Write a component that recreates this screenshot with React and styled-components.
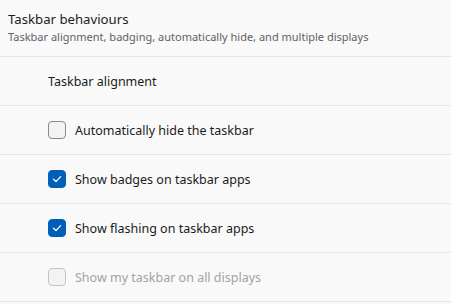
import React from 'react';
import styled, { createGlobalStyle } from 'styled-components';

const Global = createGlobalStyle`
  html, body {
    margin: 0;
    padding: 0;
    background: #f9f9f9;
  }
  body {
    font-family: "Noto Sans", "Open Sans", sans-serif;
    color: #1b1b1b;
  }
`;

const Panel = styled.div`
  width: 451px;
  height: 304px;
  background: #f9f9f9;
  overflow: hidden;
`;

const Header = styled.div`
  height: 57px;
  box-sizing: border-box;
  padding: 9px 8px 0 8px;
  border-bottom: 1px solid #e5e5e5;
`;

const Title = styled.div`
  font-size: 13.2px;
  line-height: 20px;
  color: #1b1b1b;
`;

const Subtitle = styled.div`
  font-size: 11px;
  line-height: 16px;
  color: #616161;
`;

const Row = styled.div`
  height: 49px;
  box-sizing: border-box;
  border-bottom: 1px solid #e5e5e5;
  display: flex;
  align-items: center;
  gap: 9px;
  padding-left: 48px;
  font-size: 12.5px;
  color: ${({ $disabled }) => ($disabled ? '#a3a3a3' : '#1b1b1b')};
`;

const Box = styled.span`
  width: 18px;
  height: 18px;
  box-sizing: border-box;
  border-radius: 4px;
  display: flex;
  align-items: center;
  justify-content: center;
  background: ${({ $checked }) => ($checked ? '#005fb8' : '#f3f3f3')};
  border: 1px solid ${({ $checked, $disabled }) =>
    $checked ? '#005fb8' : $disabled ? '#c4c4c4' : '#8a8a8a'};
`;

const Check = () => (
  <svg width="12" height="12" viewBox="0 0 12 12" fill="none">
    <path d="M2.5 6.3 L5 8.6 L9.6 3.6" stroke="#fff" strokeWidth="1.3" strokeLinecap="round" strokeLinejoin="round" />
  </svg>
);

const Checkbox = ({ checked, disabled, label }) => (
  <Row $disabled={disabled}>
    <Box $checked={checked} $disabled={disabled}>{checked && <Check />}</Box>
    <span>{label}</span>
  </Row>
);

const options = [
  { label: 'Automatically hide the taskbar', checked: false },
  { label: 'Show badges on taskbar apps', checked: true },
  { label: 'Show flashing on taskbar apps', checked: true },
  { label: 'Show my taskbar on all displays', checked: false, disabled: true },
];

export default function App() {
  return (
    <Panel>
      <Global />
      <Header>
        <Title>Taskbar behaviours</Title>
        <Subtitle>Taskbar alignment, badging, automatically hide, and multiple displays</Subtitle>
      </Header>
      <Row>Taskbar alignment</Row>
      {options.map((o) => (
        <Checkbox key={o.label} {...o} />
      ))}
    </Panel>
  );
}
